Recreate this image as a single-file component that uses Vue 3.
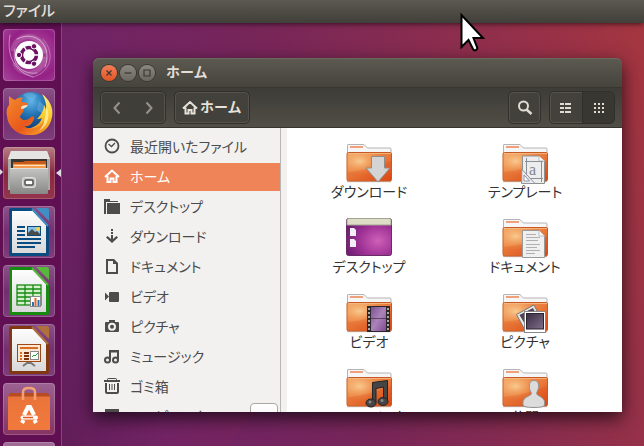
<script setup>
import { ref } from 'vue'

const apps = [
  { id: 'dash', label: 'Dash' },
  { id: 'firefox', label: 'Firefox' },
  { id: 'cabinet', label: 'ファイル', active: true },
  { id: 'writer', label: 'Writer' },
  { id: 'calc', label: 'Calc' },
  { id: 'impress', label: 'Impress' },
  { id: 'software', label: 'Software' },
  { id: 'more', label: 'More' }
]

const places = [
  { id: 'recent', label: '最近開いたファイル' },
  { id: 'home', label: 'ホーム' },
  { id: 'desktop', label: 'デスクトップ' },
  { id: 'downloads', label: 'ダウンロード' },
  { id: 'documents', label: 'ドキュメント' },
  { id: 'videos', label: 'ビデオ' },
  { id: 'pictures', label: 'ピクチャ' },
  { id: 'music', label: 'ミュージック' },
  { id: 'trash', label: 'ゴミ箱' },
  { id: 'computer', label: 'コンピュータ', eject: true }
]

const folders = [
  { id: 'downloads', label: 'ダウンロード' },
  { id: 'templates', label: 'テンプレート' },
  { id: 'desktop', label: 'デスクトップ' },
  { id: 'documents', label: 'ドキュメント' },
  { id: 'videos', label: 'ビデオ' },
  { id: 'pictures', label: 'ピクチャ' },
  { id: 'music', label: 'ミュージック' },
  { id: 'public', label: '公開' }
]

const current = ref('home')
const docColors = { writer: ['#0a4b80', '#3f8fc4'], calc: ['#178a12', '#58b83c'], impress: ['#81370f', '#b0703c'] }
</script>

<template>
  <div class="desktop">
    <svg class="defs" aria-hidden="true">
      <defs>
        <linearGradient id="gFolder" x1="0" y1="0" x2="1" y2="1">
          <stop offset="0" stop-color="#f2a565" /><stop offset=".5" stop-color="#ea7c3c" /><stop offset="1" stop-color="#dd4814" />
        </linearGradient>
        <radialGradient id="gShine" cx=".28" cy=".3" r=".5">
          <stop offset="0" stop-color="#fbd9a0" stop-opacity=".8" /><stop offset="1" stop-color="#f4a860" stop-opacity="0" />
        </radialGradient>
        <linearGradient id="gPaper" x1="0" y1="0" x2="0" y2="1">
          <stop offset="0" stop-color="#fdfdfd" /><stop offset="1" stop-color="#d9d9d9" />
        </linearGradient>
        <linearGradient id="gMetal" x1="0" y1="0" x2="0" y2="1">
          <stop offset="0" stop-color="#c4c4c2" /><stop offset="1" stop-color="#888886" />
        </linearGradient>
        <radialGradient id="gDesk" cx=".7" cy=".6" r=".75">
          <stop offset="0" stop-color="#d060b8" /><stop offset=".6" stop-color="#9a2f92" /><stop offset="1" stop-color="#6c1f70" />
        </radialGradient>
        <linearGradient id="gFilm" x1="0" y1="0" x2="1" y2="1">
          <stop offset="0" stop-color="#7d5192" /><stop offset=".5" stop-color="#ac83b9" /><stop offset="1" stop-color="#7b4b92" />
        </linearGradient>
        <linearGradient id="gPhoto" x1="0" y1="0" x2="1" y2="1">
          <stop offset="0" stop-color="#3a2c42" /><stop offset="1" stop-color="#80708a" />
        </linearGradient>
        <radialGradient id="gGlobe" cx=".5" cy=".25" r=".7">
          <stop offset="0" stop-color="#5fb4e6" /><stop offset=".5" stop-color="#2374b4" /><stop offset="1" stop-color="#133f7e" />
        </radialGradient>
        <linearGradient id="gFox" x1="0" y1="0" x2="1" y2="1">
          <stop offset="0" stop-color="#f58a2c" /><stop offset=".6" stop-color="#e8581c" /><stop offset="1" stop-color="#f8a32a" />
        </linearGradient>
        <linearGradient id="gFlame" x1="0" y1="0" x2="0" y2="1">
          <stop offset="0" stop-color="#fff08a" /><stop offset=".5" stop-color="#fbcf32" /><stop offset="1" stop-color="#f08a20" />
        </linearGradient>
        <linearGradient id="gBag" x1="0" y1="0" x2="0" y2="1">
          <stop offset="0" stop-color="#e9743a" /><stop offset="1" stop-color="#f2793c" />
        </linearGradient>
      </defs>
    </svg>

    <header class="panel">ファイル</header>

    <div class="workspace">
      <nav class="launcher">
        <button v-for="app in apps" :key="app.id" type="button" class="tile" :class="[app.id, { active: app.active }]" :aria-label="app.label">
          <svg viewBox="0 0 52 52" aria-hidden="true">
            <g v-if="app.id === 'dash'">
              <g fill="none" stroke="#fff" stroke-linecap="round">
                <path d="M10 20C14 3 38 3 42 22" stroke-width="5" opacity=".16" />
                <path d="M42 30C38 46 20 49 12 36" stroke-width="5" opacity=".14" />
                <path d="M7 6C3 27 12 43 30 48" stroke-width="1" opacity=".45" />
                <path d="M14 10C34 0 50 18 42 38" stroke-width="1" opacity=".5" />
                <path d="M40 10C54 26 46 44 30 48" stroke-width="1" opacity=".3" />
                <path d="M12 20C8 34 18 46 34 44" stroke-width="1" opacity=".45" />
              </g>
              <circle cx="26" cy="26" r="14" fill="#fff" />
              <circle cx="26" cy="26" r="7.500" fill="none" stroke="#6d1262" stroke-width="3.600" />
              <path d="M26 26L37.500 26M26 26L20 15.500M26 26L20 36.500" stroke="#fff" stroke-width="1.400" />
              <circle cx="26" cy="26" r="5.300" fill="#fff" />
              <g fill="#6d1262" stroke="#fff" stroke-width="1"><circle cx="16" cy="26" r="2.700" /><circle cx="31" cy="17.300" r="2.700" /><circle cx="31" cy="34.700" r="2.700" /></g>
            </g>
            <g v-else-if="app.id === 'firefox'">
              <circle cx="28" cy="23" r="19" fill="url(#gGlobe)" />
              <path d="M20 7C23 4 30 4 34 8L30 13L25 11ZM36 13L42 18L40 26L34 22Z" fill="#83c7ee" opacity=".35" />
              <path d="M39 6C46 11 51 20 49 29C47 41 37 48 27 47C20 46 15 43 13 40C25 43 36 39 39 30C37 31 35 31 34 31C38 27 41 22 41 17C42 19 43 21 43 23C44 17 42 11 39 6Z" fill="url(#gFlame)" />
              <path d="M6 8C8 10 10 11 12 12C14 10 17 9 20 10C18 12 18 13 19 14L25 15C26 17 24 18 21 20L20 24C19 26 17 27 17 29C20 34 25 32 28 29C30 27 32 29 31 31C29 36 26 39 21 38C27 43 37 40 41 33C44 36 39 44 32 46C19 50 5 42 4 28C3 24 4 19 6 17Z" fill="url(#gFox)" />
              <path d="M18 19C20 17 23 17 25 17C24 19 21 21 18 21Z" fill="#fbe4c4" />
              <path d="M43 18C48 27 45 38 36 43C42 36 43 27 43 18Z" fill="#fff3a0" opacity=".8" />
            </g>
            <g v-else-if="app.id === 'cabinet'">
              <path d="M8 4H44L47 12V43H5V12Z" fill="#a9a9a7" />
              <path d="M8 4H44L47 12H5Z" fill="#e4e4e2" />
              <rect x="8" y="12" width="36" height="11" fill="#3b3531" />
              <path d="M10 15H20L22 14H43V22H10Z" fill="#c65a1b" />
              <path d="M10 17H43V23H10Z" fill="#f59b4d" /><path d="M11 18.500H42" stroke="#ffe2bb" stroke-width="1" />
              <rect x="7" y="21" width="38" height="26" rx="1" fill="url(#gMetal)" />
              <path d="M7 21.500H45" stroke="#dfdfdd" stroke-width="1" />
              <rect x="19.500" y="30.500" width="13" height="10" rx="2" fill="#c8c8c8" stroke="#dedede" />
              <rect x="22" y="33" width="8" height="5" rx="1" fill="#fff" stroke="#4b4b4b" stroke-width="1.500" />
            </g>
            <g v-else-if="docColors[app.id]">
              <path d="M8 2H29L46 20V48Q46 50 44 50H8Q6 50 6 48V4Q6 2 8 2Z" :fill="docColors[app.id][0]" />
              <path d="M33 2H44Q46 2 46 4V15Q44 13 33 2Z" :fill="docColors[app.id][1]" />
              <path d="M9 5H30L43 19V47H9Z" fill="url(#gPaper)" />
              <path d="M29 3L45 20" :stroke="docColors[app.id][1]" stroke-width="2" />
              <g v-if="app.id === 'writer'">
                <path d="M14 21H22M14 25H22M14 29H22M14 33H38M14 37H38M14 41H32" stroke="#0a4b80" stroke-width="2" />
                <rect x="24.500" y="20.500" width="13" height="9" fill="#87c4ec" stroke="#0a4b80" />
                <circle cx="35" cy="23" r="2" fill="#f2d54a" /><path d="M25 29V27L29 23L32 26L34 25L37 28V29Z" fill="#4b4b48" />
              </g>
              <g v-else-if="app.id === 'calc'">
                <rect x="14" y="20" width="24" height="20" fill="#d4f0cc" stroke="#178a12" stroke-width="1.300" />
                <path d="M22 20V40M30 20V40M14 24H38M14 28H38M14 32H38M14 36H38" stroke="#178a12" stroke-width="1.300" />
                <rect x="27.500" y="31.500" width="10" height="10" fill="#fff" stroke="#888" />
                <path d="M30 41V37" stroke="#2375b5" stroke-width="2" /><path d="M32.500 41V33" stroke="#e96420" stroke-width="2" /><path d="M35.500 41V35" stroke="#2375b5" stroke-width="2" />
              </g>
              <g v-else>
                <rect x="14.500" y="20.500" width="23" height="17" fill="#fde7d3" stroke="#9c4716" />
                <path d="M17 24H35" stroke="#d96c23" stroke-width="2" />
                <path d="M17 29H19M17 32H19M17 35H19" stroke="#d96c23" stroke-width="2" />
                <path d="M21 29H26M21 32H26M21 35H26" stroke="#7c310c" stroke-width="2" />
                <rect x="27.500" y="27.500" width="8" height="8" fill="#fff" stroke="#888" /><path d="M29 33L31 31L32 32L35 29" stroke="#25a02c" fill="none" />
                <path d="M26 38V40M20 42L24 39H28L32 42" stroke="#777" stroke-width="2" fill="none" />
              </g>
            </g>
            <g v-else-if="app.id === 'software'">
              <path d="M7 10H45L47 14H5Z" fill="#b84c20" />
              <path d="M5 13.500H47V47H5Z" fill="url(#gBag)" />
              <path d="M20 17V9Q20 5 26 5Q32 5 32 9V17" fill="none" stroke="#f2a274" stroke-width="2.500" />
              <g stroke="#fff" stroke-width="4">
                <line x1="25.500" y1="23" x2="21" y2="32" /><line x1="26.500" y1="23" x2="31" y2="32" />
                <line x1="20.500" y1="37" x2="19" y2="40" /><line x1="31.500" y1="37" x2="33" y2="40" />
                <line x1="19.500" y1="34.500" x2="33" y2="34.500" stroke-linecap="round" />
              </g>
              <path d="M24 22H28V25H24Z" fill="#fff" />
              <path d="M20 34.500H30" stroke="#e8571e" stroke-width="1.500" />
            </g>
          </svg>
        </button>
      </nav>

      <main class="window">
        <div class="titlebar">
          <button type="button" class="dot close" aria-label="閉じる"><svg viewBox="0 0 16 16"><path d="M5.500 5.500L10.500 10.500M10.500 5.500L5.500 10.500" /></svg></button>
          <button type="button" class="dot" aria-label="最小化"><svg viewBox="0 0 16 16"><path d="M4.500 8H11.500" /></svg></button>
          <button type="button" class="dot" aria-label="最大化"><svg viewBox="0 0 16 16"><path d="M5 5H11V11H5Z" /></svg></button>
          <h1>ホーム</h1>
        </div>

        <div class="toolbar">
          <div class="group nav">
            <button type="button" aria-label="戻る"><svg viewBox="0 0 16 16"><path d="M10.500 2.500L5.500 8L10.500 13.500" /></svg></button>
            <button type="button" aria-label="進む"><svg viewBox="0 0 16 16"><path d="M5.500 2.500L10.500 8L5.500 13.500" /></svg></button>
          </div>
          <button type="button" class="path">
            <svg viewBox="0 0 16 16" aria-hidden="true"><path d="M1 8.500L8 2L15 8.500M3.500 7.500V13.500H6.500V10H9.500V13.500H12.500V7.500" fill="none" stroke="#e6e2da" stroke-width="2" /></svg>
            <span>ホーム</span>
          </button>
          <div class="spacer"></div>
          <button type="button" class="search" aria-label="検索">
            <svg viewBox="0 0 16 16"><circle cx="6.500" cy="6" r="4.500" fill="none" stroke="#e0dcd4" stroke-width="2" /><path d="M9.500 9.500L14.500 14" stroke="#e0dcd4" stroke-width="2.500" /></svg>
          </button>
          <div class="group views">
            <button type="button" aria-label="リスト表示"><svg viewBox="0 0 16 16" fill="#e0dcd4"><path d="M2 3h4v2H2zM7 3h6v2H7zM2 7h4v2H2zM7 7h6v2H7zM2 11h4v2H2zM7 11h6v2H7z" /></svg></button>
            <button type="button" class="on" aria-label="アイコン表示"><svg viewBox="0 0 16 16" fill="#e0dcd4"><path d="M3 3h2v2H3zM7 3h2v2H7zM11 3h2v2h-2zM3 7h2v2H3zM7 7h2v2H7zM11 7h2v2h-2zM3 11h2v2H3zM7 11h2v2H7zM11 11h2v2h-2z" /></svg></button>
          </div>
        </div>

        <div class="content">
          <ul class="places">
            <li v-for="p in places" :key="p.id" :class="{ selected: p.id === current }">
              <a href="#" @click.prevent="current = p.id">
                <svg viewBox="0 0 16 16" fill="currentColor" stroke="none" aria-hidden="true">
                  <g v-if="p.id === 'recent'" fill="none" stroke="currentColor"><circle cx="8" cy="8" r="6.500" stroke-width="1.800" /><path d="M4.500 6L7.500 8.500L11 5" stroke-width="1.300" /></g>
                  <path v-else-if="p.id === 'home'" d="M1 9L8 2.500L15 9M3.500 8V14H6.500V10.500H9.500V14H12.500V8" fill="none" stroke="currentColor" stroke-width="2" />
                  <path v-else-if="p.id === 'desktop'" d="M0 1H6V3H14V4H2V16H0ZM3 5H16V16H3Z" />
                  <path v-else-if="p.id === 'downloads'" d="M7 1H9V3H7ZM7 4H9V6H7ZM7 7H9V11L12.500 8L14 9.500L8 15L2 9.500L3.500 8L7 11Z" />
                  <path v-else-if="p.id === 'documents'" fill-rule="evenodd" d="M2 1H10L14 5V16H2ZM4 3V14H12V6H9V3Z" />
                  <path v-else-if="p.id === 'videos'" d="M1 4.500L5 8.500L1 12.500ZM5 4.500Q5 4 6 4H14Q15 4 15 5V13Q15 14 14 14H6Q5 14 5 13Z" />
                  <path v-else-if="p.id === 'pictures'" fill-rule="evenodd" d="M2 4H5V2H11V4H14Q15 4 15 5V13Q15 14 14 14H2Q1 14 1 13V5Q1 4 2 4ZM8 4.800A4 4 0 1 0 8 12.800A4 4 0 1 0 8 4.800ZM8 6.800A2 2 0 1 1 8 10.800A2 2 0 1 1 8 6.800Z" />
                  <g v-else-if="p.id === 'music'"><path d="M5 2H15V12H13V4.500H7V12H5Z" /><g fill="none" stroke="currentColor" stroke-width="2"><circle cx="3.500" cy="12" r="2.500" /><circle cx="11.500" cy="12" r="2.500" /></g></g>
                  <path v-else-if="p.id === 'trash'" fill-rule="evenodd" d="M0 2H3Q3 0 5 0H11Q13 0 13 2H16V4H0ZM4 1V2H12V1ZM1 5H3V14H13V5H15V14Q15 16 13 16H3Q1 16 1 14ZM5 6H6V12H5ZM7.500 6H8.500V12H7.500ZM10 6H11V12H10Z" />
                  <path v-else d="M1 1H15V15H1Z" />
                </svg>
                <span>{{ p.label }}</span>
              </a>
              <button v-if="p.eject" type="button" class="eject" aria-label="取り出し"></button>
            </li>
          </ul>

          <div class="files">
            <a v-for="f in folders" :key="f.id" href="#" class="item" @click.prevent>
              <svg viewBox="0 0 48 44" aria-hidden="true">
                <g v-if="f.id === 'desktop'">
                  <rect x="1.500" y="3.500" width="45" height="37" rx="2" fill="url(#gDesk)" stroke="#6b2a68" />
                  <path d="M2 10V5Q2 3.500 3.500 3.500H44.500Q46 3.500 46 5V10Z" fill="#deddc6" stroke="#a5a491" />
                  <path d="M5 13h4l2 2v6H5zM5 24h4l2 2v6H5z" fill="#f3eef3" />
                </g>
                <g v-else>
                  <path d="M2 41.500H46" stroke="#000" stroke-width="1.500" opacity=".2" />
                  <path d="M2.500 14V5Q2.500 4.500 3 4.500H18C21 4.500 20 8 24 8H45Q46 8 46 9V14Z" fill="#f6f6f6" stroke="#b4b4b4" />
                  <path d="M5 7H18" stroke="#f0a07a" stroke-width="2" />
                  <rect x="2" y="12.500" width="44.500" height="28.500" rx="1.500" fill="url(#gFolder)" stroke="#c65a24" stroke-width="1" />
                  <rect x="2.500" y="13" width="43.500" height="27.500" fill="url(#gShine)" />
                  <path d="M3 13.500H46" stroke="#f8bc88" stroke-width="1" opacity=".8" />
                  <path d="M3 32Q25 30 46 21V40H3Z" fill="#d8430f" opacity=".2" />
                </g>
                <path v-if="f.id === 'downloads'" d="M26.500 16.500H39.500V28H45L33 42L21 28H26.500Z" fill="#d4d4d4" stroke="#8d8d8d" />
                <g v-else-if="f.id === 'templates'">
                  <path d="M21.500 16H38L43.500 21V43.500H21.500Z" fill="#ededed" stroke="#8f8f8f" />
                  <path d="M38 16V21H43.500" fill="#fff" stroke="#bbb" />
                  <path d="M24 21.500H42M24 38.500H42M25.500 18V42M40.500 22V42" stroke="#8a9097" />
                  <text x="28" y="35" class="glyph">a</text>
                  <path d="M20.500 29V43.500H34Z" fill="#e8e8f0" fill-opacity=".8" stroke="#92929f" /><path d="M23 35V41H28.500Z" fill="#fff" stroke="#92929f" />
                </g>
                <g v-else-if="f.id === 'documents'">
                  <path d="M21.500 15.500H38L43.500 21V42.500H21.500Z" fill="#f0f0f0" stroke="#999" />
                  <path d="M38 15.500V21H43.500" fill="#fff" stroke="#bbb" />
                  <path d="M25 19.500H35M25 22.500H39M25 25.500H37M25 29.500H39M25 32.500H36M25 35.500H39M25 38.500H34" stroke="#b0b0b0" />
                </g>
                <g v-else-if="f.id === 'videos'">
                  <rect x="22" y="16" width="23" height="26" fill="#2b2829" /><rect x="26" y="17" width="15" height="24" fill="url(#gFilm)" />
                  <path d="M26 28.500H41" stroke="#2b2829" opacity=".6" /><path d="M24 18V42M43 18V42" stroke="#aaa" stroke-width="2" stroke-dasharray="2 2" />
                </g>
                <g v-else-if="f.id === 'pictures'">
                  <path d="M15.500 24.500L33 15L41 31L24 40Z" fill="#e8e8e8" stroke="#777" /><path d="M18.500 25L32 18L38 30L25 36Z" fill="url(#gPhoto)" />
                  <rect x="23.500" y="21.500" width="21" height="21" fill="#fff" stroke="#888" /><rect x="25.500" y="23.500" width="17" height="15.500" fill="url(#gPhoto)" stroke="#2c2230" />
                </g>
                <g v-else-if="f.id === 'music'" fill="#454545" stroke="#252525">
                  <path d="M27.500 17.500L42.500 15.500V37H38.500V22L31 23.500V38H27.500Z" /><ellipse cx="26" cy="38" rx="5" ry="4" /><ellipse cx="38" cy="36.500" rx="5" ry="4" />
                  <circle cx="25" cy="37" r="1.500" fill="#888" stroke="none" /><circle cx="37" cy="35.500" r="1.500" fill="#888" stroke="none" />
                </g>
                <path v-else-if="f.id === 'public'" d="M33 15.500C37 15.500 38 19 37.500 22.500C37 25.500 36 26.500 35.500 28.500C36 31 43.500 32 43.500 37V40Q43 42.500 33 42.500Q22.500 42.500 22 40V37C22 32 30 31 30.500 28.500C30 26.500 28.500 25.500 28.500 22.500C28 19 29 15.500 33 15.500Z" fill="#dcdcdc" stroke="#929292" />
              </svg>
              <span>{{ f.label }}</span>
            </a>
          </div>
        </div>
      </main>
    </div>

    <svg class="pointer" viewBox="0 0 28 42" aria-hidden="true">
      <path d="M2.500 4V36L9.500 29L14 38Q15 40 17 39Q19 38 18 36L14.500 27H24Z" fill="#fff" stroke="#000" stroke-width="2" />
    </svg>
  </div>
</template>

<style>
body {
  margin: 0;
}
</style>

<style scoped>
.desktop {
  position: relative;
  display: flex;
  flex-direction: column;
  height: 100vh;
  overflow: hidden;
  box-sizing: border-box;
  font-family: "Noto Sans CJK JP", sans-serif;
  font-size: 14px;
  font-feature-settings: "palt";
  line-height: 18px;
  color: #4c4c4c;
  background:
    linear-gradient(132deg, transparent 40%, rgba(160, 40, 70, 0.1) 60%, transparent 60%),
    linear-gradient(75deg, #5c1c55 5%, #6f2367 22%, #782658 50%, #8f2f4c 78%, #a5363f 100%);
}
.defs {
  position: absolute;
  width: 0;
  height: 0;
}
button {
  padding: 0;
  border: 0;
  font: inherit;
  font-feature-settings: inherit;
  color: inherit;
  background: none;
}
a {
  color: inherit;
  text-decoration: none;
}
.panel {
  position: relative;
  z-index: 1;
  flex: none;
  height: 23px;
  box-sizing: border-box;
  padding: 1px 3px;
  font-size: 15px;
  font-weight: 500;
  color: #e3dfd7;
  background: linear-gradient(#5b5950, #403f39);
  box-shadow: 0 1px 5px rgba(0, 0, 0, 0.6);
}
.workspace {
  display: flex;
  flex: 1;
  min-height: 0;
}
.launcher {
  display: flex;
  flex: none;
  flex-direction: column;
  gap: 7px;
  width: 61px;
  box-sizing: content-box;
  padding-top: 6px;
  border-right: 1px solid #884581;
  overflow: hidden;
  background: #600f53;
}
.tile {
  position: relative;
  flex: none;
  width: 52px;
  height: 52px;
  margin-left: 3px;
  border-radius: 4px;
  background: linear-gradient(rgba(255, 255, 255, 0.22), rgba(255, 255, 255, 0.06) 50%, rgba(255, 255, 255, 0.12)), #6b2167;
  box-shadow: inset 0 0 0 1px rgba(255, 255, 255, 0.18);
}
.tile svg {
  display: block;
}
.tile.dash {
  background: radial-gradient(circle at 60% 45%, #b455a4, #942185 60%, #a7489c);
}
.tile.cabinet {
  background: linear-gradient(#b57e83, #8b2741 50%, #93354c);
}
.tile.software {
  background: linear-gradient(#9b6292, #863363);
}
.tile.more {
  background: #a06b95;
}
.tile.active::before,
.tile.active::after {
  content: "";
  position: absolute;
  top: 22px;
  border: 4px solid transparent;
}
.tile.active::before {
  left: -3px;
  border-width: 3px 0 3px 3px;
  border-left-color: #ddd;
}
.tile.active::after {
  right: -6px;
  border-width: 4px 5px 4px 0;
  border-right-color: #ddd;
}
.window {
  display: flex;
  flex: 1;
  flex-direction: column;
  min-width: 0;
  margin: 35px 22px 34px 31px;
  border-radius: 6px 6px 0 0;
  box-shadow: 0 6px 18px rgba(0, 0, 0, 0.7);
}
.titlebar {
  display: flex;
  flex: none;
  align-items: center;
  gap: 3px;
  height: 29px;
  padding: 0 8px;
  border-radius: 6px 6px 0 0;
  background: linear-gradient(#5c5a51, #45443d);
  box-shadow: inset 0 1px 0 #6b695e;
}
.titlebar h1 {
  margin: 0 0 0 8px;
  padding-bottom: 3px;
  font-size: 14px;
  font-weight: 700;
  font-feature-settings: normal;
  color: #e3dfd7;
}
.dot {
  width: 16px;
  height: 16px;
  border-radius: 8px;
  background: linear-gradient(#8a8880, #696760);
  box-shadow: 0 0 0 1px #3a3934;
}
.dot.close {
  background: linear-gradient(#f37d58, #e05523);
}
.dot svg {
  display: block;
  fill: none;
  stroke: #393731;
  stroke-width: 1.2;
}
.toolbar {
  display: flex;
  flex: none;
  align-items: center;
  gap: 8px;
  height: 41px;
  box-sizing: border-box;
  padding: 0 7px;
  border-top: 1px solid #37362f;
  border-bottom: 1px solid #35342f;
  background: linear-gradient(#3d3c37, #504e46);
}
.toolbar svg {
  width: 16px;
  height: 16px;
}
.group,
.path,
.search {
  display: flex;
  align-items: center;
  height: 33px;
  box-sizing: border-box;
  border: 1px solid #302f2b;
  border-radius: 5px;
  background: #42413b;
  box-shadow: inset 0 0 0 1px #55534b;
}
.nav {
  background: #3f3e39;
}
.group button {
  display: flex;
  align-items: center;
  justify-content: center;
  width: 32px;
  height: 31px;
}
.nav svg {
  fill: none;
  stroke: #96938b;
  stroke-width: 2;
}
.path {
  gap: 2px;
  padding: 0 7px;
  font-weight: 700;
  font-feature-settings: normal;
  color: #e6e2da;
}
.path span {
  padding-bottom: 3px;
}
.spacer {
  flex: 1;
}
.search {
  justify-content: center;
  width: 33px;
}
.views .on {
  border-left: 1px solid #302f2b;
  border-radius: 0 4px 4px 0;
  background: #383732;
}
.content {
  display: flex;
  flex: 1;
  min-height: 0;
  overflow: hidden;
  background: #f2f1f0;
}
.places {
  display: flex;
  flex: none;
  flex-direction: column;
  gap: 2px;
  width: 187px;
  margin: 0 6px 0 0;
  padding: 5px 0 0;
  border-right: 1px solid #b9b6b2;
  list-style: none;
}
.places li {
  display: flex;
  flex: none;
  align-items: center;
  height: 28px;
  box-sizing: border-box;
  padding: 0 2px 2px 11px;
}
.places a {
  display: flex;
  flex: 1;
  align-items: center;
  gap: 10px;
}
.places svg {
  width: 16px;
  height: 16px;
}
.places .selected {
  color: #fff;
  background: #f08459;
}
.eject {
  width: 28px;
  height: 26px;
  border: 1px solid #aaa7a3;
  border-radius: 4px;
  background: linear-gradient(#fff, #eee);
}
.files {
  display: grid;
  flex: 1;
  grid-template-columns: repeat(auto-fill, 156px);
  grid-auto-rows: 62px;
  gap: 13px 0;
  padding: 12px 4px 0;
  color: #333;
  background: #fff;
}
.item {
  display: flex;
  flex-direction: column;
  align-items: center;
}
.item svg {
  flex: none;
  width: 48px;
  height: 44px;
}
.item span {
  margin-top: -2px;
}
.glyph {
  font: 16px "Liberation Serif", serif;
  fill: #7e858c;
}
.pointer {
  position: absolute;
  top: 11px;
  left: 459px;
  z-index: 2;
  width: 28px;
  height: 42px;
}
</style>
